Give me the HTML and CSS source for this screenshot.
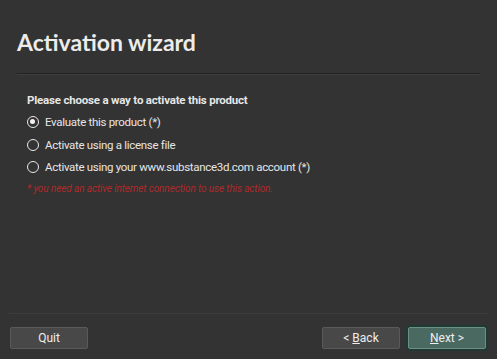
FILE: index.html
```html
<!DOCTYPE html>
<html lang="en">
<head>
  <meta charset="UTF-8" />
  <title>Activation wizard</title>
  <link rel="stylesheet" href="styles.css">
</head>
<body>
  <div class="wizard">
    <header class="wizard-head">
      <h1>Activation wizard</h1>
    </header>

    <form class="wizard-body">
      <div class="question">Please choose a way to activate this product</div>
      <label class="option">
        <input type="radio" name="mode" value="evaluate" checked>
        <span class="dot"></span>
        <span>Evaluate this product (*)</span>
      </label>
      <label class="option">
        <input type="radio" name="mode" value="file">
        <span class="dot"></span>
        <span>Activate using a license file</span>
      </label>
      <label class="option">
        <input type="radio" name="mode" value="account">
        <span class="dot"></span>
        <span>Activate using your www.substance3d.com account (*)</span>
      </label>
      <div class="note">* you need an active internet connection to use this action.</div>
    </form>

    <footer class="wizard-foot">
      <button type="button" class="btn">Quit</button>
      <div class="nav">
        <button type="button" class="btn">&lt; <u>B</u>ack</button>
        <button type="button" class="btn btn-primary"><u>N</u>ext &gt;</button>
      </div>
    </footer>
  </div>
</body>
</html>
```

FILE: styles.css
```css
body {
  margin: 0;
  background: #333333;
  color: #e6e6e6;
  font-family: Roboto, 'Open Sans', sans-serif;
}
.wizard {
  height: 359px;
  display: flex;
  flex-direction: column;
}
.wizard-head {
  margin: 0 17px 0 17px;
  padding-top: 27px;
  height: 46px;
  border-bottom: 1px solid #232323;
  box-shadow: 0 1px 0 #3e3e3e;
}
h1 {
  margin: 0;
  font-family: Lato, 'Open Sans', sans-serif;
  font-size: 23px;
  font-weight: 700;
  line-height: 30px;
  color: #ececec;
}
.wizard-body {
  flex: 1;
  padding: 18px 27px 0;
  font-size: 11.5px;
  letter-spacing: -0.3px;
}
.question {
  font-weight: 700;
  line-height: 16px;
  margin-bottom: 3px;
  letter-spacing: -0.2px;
}
.option {
  display: flex;
  align-items: center;
  gap: 6px;
  height: 22.5px;
  cursor: pointer;
}
.option input {
  display: none;
}
.dot {
  box-sizing: border-box;
  width: 12px;
  height: 12px;
  border-radius: 50%;
  border: 1.5px solid #e8e8e8;
  position: relative;
}
.option input:checked + .dot::after {
  content: '';
  position: absolute;
  left: 2px;
  top: 2px;
  width: 5px;
  height: 5px;
  border-radius: 50%;
  background: #f2f2f2;
}
.note {
  margin-top: 4px;
  font-size: 10px;
  font-style: italic;
  letter-spacing: -0.1px;
  color: #b02a2a;
}
.wizard-foot {
  margin: 0 9px;
  padding: 13px 2px 10px 1px;
  border-top: 1px solid #3c3c3c;
  display: flex;
  justify-content: space-between;
  align-items: center;
}
.nav {
  display: flex;
  gap: 8px;
}
.btn {
  box-sizing: border-box;
  width: 78px;
  height: 22px;
  background: #484848;
  border: 1px solid #5a5a5a;
  border-radius: 2px;
  color: #eeeeee;
  font-family: inherit;
  font-size: 12px;
  padding: 0;
  cursor: pointer;
}
.btn-primary {
  background: #4a6960;
  border-color: #6f8f86;
  box-shadow: 0 0 0 2px #1e3a32;
}
```
